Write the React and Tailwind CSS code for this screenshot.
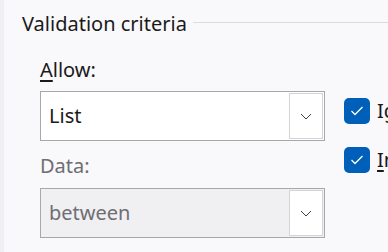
import React from "react";

const Chevron = () => (
  <svg width="12" height="7" viewBox="0 0 12 7" fill="none">
    <path d="M1 1L6 6L11 1" stroke="#3f3f42" strokeWidth="1" />
  </svg>
);

const Check = () => (
  <svg width="14" height="10" viewBox="0 0 14 10" fill="none">
    <path d="M1.5 5L5 8.5L12.5 1" stroke="#ffffff" strokeWidth="1.3" />
  </svg>
);

const Select = ({ value, disabled }) => (
  <div
    className={`flex h-[50px] w-[285px] items-stretch border border-[#a8a8ab] p-px ${
      disabled ? "bg-[#f0eff2]" : "bg-white"
    }`}
  >
    <div
      className={`flex flex-1 items-center pl-[7px] text-[20px] ${
        disabled ? "text-[#6e6e73]" : "text-[#1a1a1a]"
      }`}
    >
      {value}
    </div>
    <div className="flex w-[34px] items-center justify-center border border-[#d4d4d6] bg-white">
      <Chevron />
    </div>
  </div>
);

const CheckRow = ({ children }) => (
  <div className="flex items-center gap-[7px] whitespace-nowrap">
    <div className="flex h-[26px] w-[26px] shrink-0 items-center justify-center rounded-[5px] bg-[#005fb8]">
      <Check />
    </div>
    <span className="text-[20px] leading-[28px] text-[#1a1a1a]">{children}</span>
  </div>
);

export default function App() {
  return (
    <div
      className="flex h-[252px] w-[388px] overflow-hidden bg-[#f9f8fb]"
      style={{ fontFamily: '"Noto Sans", sans-serif' }}
    >
      <div className="w-[4px] shrink-0 bg-[#f0eff3]" />
      <div className="flex min-w-0 flex-1 flex-col">
        <div className="flex items-center gap-[6px] pl-[18px] pt-[10px]">
          <span className="whitespace-nowrap text-[20px] leading-[28px] text-[#1a1a1a]">
            Validation criteria
          </span>
          <div className="mt-[-4px] h-px flex-1 bg-[#dcdcdf]" />
        </div>
        <div className="mt-[18px] flex pl-[36px]">
          <div className="flex flex-col">
            <span className="text-[20px] leading-[28px] text-[#1a1a1a]">
              <span className="underline underline-offset-[3px]">A</span>llow:
            </span>
            <div className="mt-[7px]">
              <Select value="List" />
            </div>
            <span className="mt-[11px] text-[20px] leading-[28px] text-[#6e6e73]">
              Data:
            </span>
            <div className="mt-[8px]">
              <Select value="between" disabled />
            </div>
          </div>
          <div className="ml-[19px] mt-[41px] flex flex-col gap-[21px]">
            <CheckRow>Ignore blank</CheckRow>
            <CheckRow>
              <span className="underline underline-offset-[3px]">I</span>n-cell dropdown
            </CheckRow>
          </div>
        </div>
      </div>
    </div>
  );
}
